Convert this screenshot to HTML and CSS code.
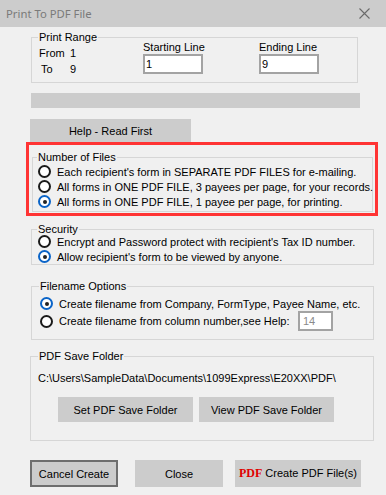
FILE: index.html
```html
<!DOCTYPE html>
<html>
<head>
<meta charset="utf-8">
<title>Print To PDF File</title>
<link rel="stylesheet" href="styles.css">
</head>
<body>
<div class="dialog">
  <div class="titlebar">
    <span class="title">Print To PDF File</span>
    <svg class="close" width="11" height="11" viewBox="0 0 11 11"><path d="M0.5 0.5 L10.5 10.5 M10.5 0.5 L0.5 10.5" stroke="#6a6a6a" stroke-width="1.1" fill="none"/></svg>
  </div>
  <div class="content">
    <fieldset class="group range">
      <legend>Print Range</legend>
      <div class="range-grid">
        <div class="fromto">
          <div class="ft"><span class="k">From</span><span>1</span></div>
          <div class="ft"><span class="k to">To</span><span>9</span></div>
        </div>
        <div class="field"><div class="flabel">Starting Line</div><div class="tbox">1</div></div>
        <div class="field"><div class="flabel">Ending Line</div><div class="tbox">9</div></div>
      </div>
    </fieldset>
    <div class="progress"></div>
    <button class="btn help">Help - Read First</button>
    <div class="highlight">
      <fieldset class="group files">
        <legend>Number of Files</legend>
        <div class="opts">
          <div class="opt"><span class="radio"></span><span>Each recipient's form in SEPARATE PDF FILES for e-mailing.</span></div>
          <div class="opt"><span class="radio"></span><span>All forms in ONE PDF FILE, 3 payees per page, for your records.</span></div>
          <div class="opt"><span class="radio on"></span><span>All forms in ONE PDF FILE, 1 payee per page, for printing.</span></div>
        </div>
      </fieldset>
    </div>
    <fieldset class="group security">
      <legend>Security</legend>
      <div class="opts">
        <div class="opt"><span class="radio"></span><span>Encrypt and Password protect with recipient's Tax ID number.</span></div>
        <div class="opt"><span class="radio on"></span><span>Allow recipient's form to be viewed by anyone.</span></div>
      </div>
    </fieldset>
    <fieldset class="group fname">
      <legend>Filename Options</legend>
      <div class="opts">
        <div class="opt"><span class="radio on"></span><span>Create filename from Company, FormType, Payee Name, etc.</span></div>
        <div class="opt tall"><span class="radio"></span><span class="grow">Create filename from column number,see Help:</span><span class="tbox dis">14</span></div>
      </div>
    </fieldset>
    <fieldset class="group folder">
      <legend>PDF Save Folder</legend>
      <div class="path">C:\Users\SampleData\Documents\1099Express\E20XX\PDF\</div>
      <div class="folder-btns">
        <button class="btn fbtn">Set PDF Save Folder</button>
        <button class="btn fbtn">View PDF Save Folder</button>
      </div>
    </fieldset>
    <div class="actions">
      <button class="btn act cancel">Cancel Create</button>
      <button class="btn act close-btn">Close</button>
      <button class="btn act create"><span class="pdf">PDF</span> Create PDF File(s)</button>
    </div>
  </div>
</div>
</body>
</html>
```
FILE: styles.css
```css
html, body {
  margin: 0;
  padding: 0;
}
body {
  background: #f0f0f0;
  font-family: "Liberation Sans", Arial, sans-serif;
  font-size: 11px;
  color: #000;
}
.dialog {
  width: 386px;
  height: 495px;
  overflow: hidden;
}
.titlebar {
  height: 27px;
  background: #cccccc;
  display: flex;
  align-items: center;
  justify-content: space-between;
  padding: 0 16px 0 6px;
  box-sizing: border-box;
}
.title {
  font-family: "Noto Sans", "Open Sans", sans-serif;
  font-size: 11.3px;
  color: #7a7a7a;
}
.close {
  display: block;
  margin-top: -1px;
}
.content {
  padding-left: 30px;
}
.group {
  margin: 0;
  padding: 0;
  border: 1px solid #d6d6d6;
  box-sizing: border-box;
  min-width: 0;
}
.group legend {
  padding: 0 1px;
  line-height: 12px;
  font-size: 11px;
}
/* Print Range */
.range {
  margin: 4px 0 0 1px;
  width: 327px;
}
.range legend { margin-left: 6px; }
.range-grid {
  display: grid;
  grid-template-columns: 104px 116px 1fr;
  align-items: start;
  padding: 0 0 5px 7px;
}
.fromto {
  margin-top: 2px;
  line-height: 16px;
}
.ft { display: flex; }
.k { width: 31px; }
.k.to { width: 29px; padding-left: 2px; }
.field { margin-top: -2px; }
.flabel { line-height: 12px; }
.tbox {
  margin-top: 1px;
  width: 60px;
  height: 20px;
  box-sizing: border-box;
  border: 2px solid #a3a3a3;
  background: #fff;
  line-height: 16px;
  padding-left: 1px;
}
.progress {
  margin: 10px 0 0 1px;
  width: 329px;
  height: 15px;
  background: #cccccc;
}
.btn {
  display: block;
  border: none;
  margin: 0;
  padding: 0;
  background: #cccccc;
  font-family: "Liberation Sans", Arial, sans-serif;
  font-size: 11px;
  color: #000;
  box-sizing: border-box;
  white-space: nowrap;
}
.help {
  margin-top: 11px;
  width: 161px;
  height: 23px;
}
/* red annotation */
.highlight {
  margin-left: -4px;
  width: 352px;
  border: 3px solid #ff3434;
  box-sizing: border-box;
  padding: 0 2px 1px 3px;
}
.files {
  margin-top: 6px;
}
.files legend { margin-left: 4px; }
.opts { display: flex; flex-direction: column; }
.opt {
  display: flex;
  align-items: center;
  height: 15px;
  gap: 6px;
  white-space: nowrap;
}
.opt.tall { height: 20px; }
.files .opts { margin-top: 1px; padding: 0 0 2px 5px; }
.radio {
  width: 13px;
  height: 13px;
  box-sizing: border-box;
  border: 2px solid #1a1a1a;
  border-radius: 50%;
  background: #fff;
  flex: none;
  position: relative;
}
.radio.on {
  border-color: #0a64c8;
}
.radio.on::after {
  content: "";
  position: absolute;
  left: 2.5px;
  top: 2.5px;
  width: 4px;
  height: 4px;
  border-radius: 50%;
  background: #222;
}
.security {
  margin: 7px 0 0 1px;
  width: 343px;
}
.security legend { margin-left: 5px; }
.security .opts { margin-top: -1px; padding: 0 0 0 6px; }
.fname {
  margin: 15px 0 0 1px;
  width: 343px;
}
.fname legend { margin-left: 7px; }
.fname .opts { margin-top: 4px; padding: 0 0 8px 8px; }
.grow { flex: 1; }
.tbox.dis {
  margin: 0 40px 0 0;
  width: 35px;
  color: #8a8a8a;
  padding-left: 3px;
}
.folder {
  margin: 10px 0 0 0;
  width: 344px;
}
.folder legend { margin-left: 7px; }
.path {
  margin-top: 10px;
  padding-left: 7px;
  line-height: 12px;
}
.folder-btns {
  display: flex;
  gap: 6px;
  margin-top: 13px;
  padding: 0 0 18px 27px;
}
.fbtn {
  width: 135px;
  height: 25px;
}
.actions {
  display: flex;
  margin-top: 19px;
}
.act { height: 27px; }
.cancel {
  width: 88px;
  border: 2px solid #6e6e6e;
}
.close-btn {
  width: 88px;
  margin-left: 17px;
}
.create {
  width: 126px;
  margin-left: 12px;
}
.pdf {
  font-family: "Liberation Serif", "Times New Roman", serif;
  font-weight: bold;
  color: #e00000;
  font-size: 12px;
}
```
